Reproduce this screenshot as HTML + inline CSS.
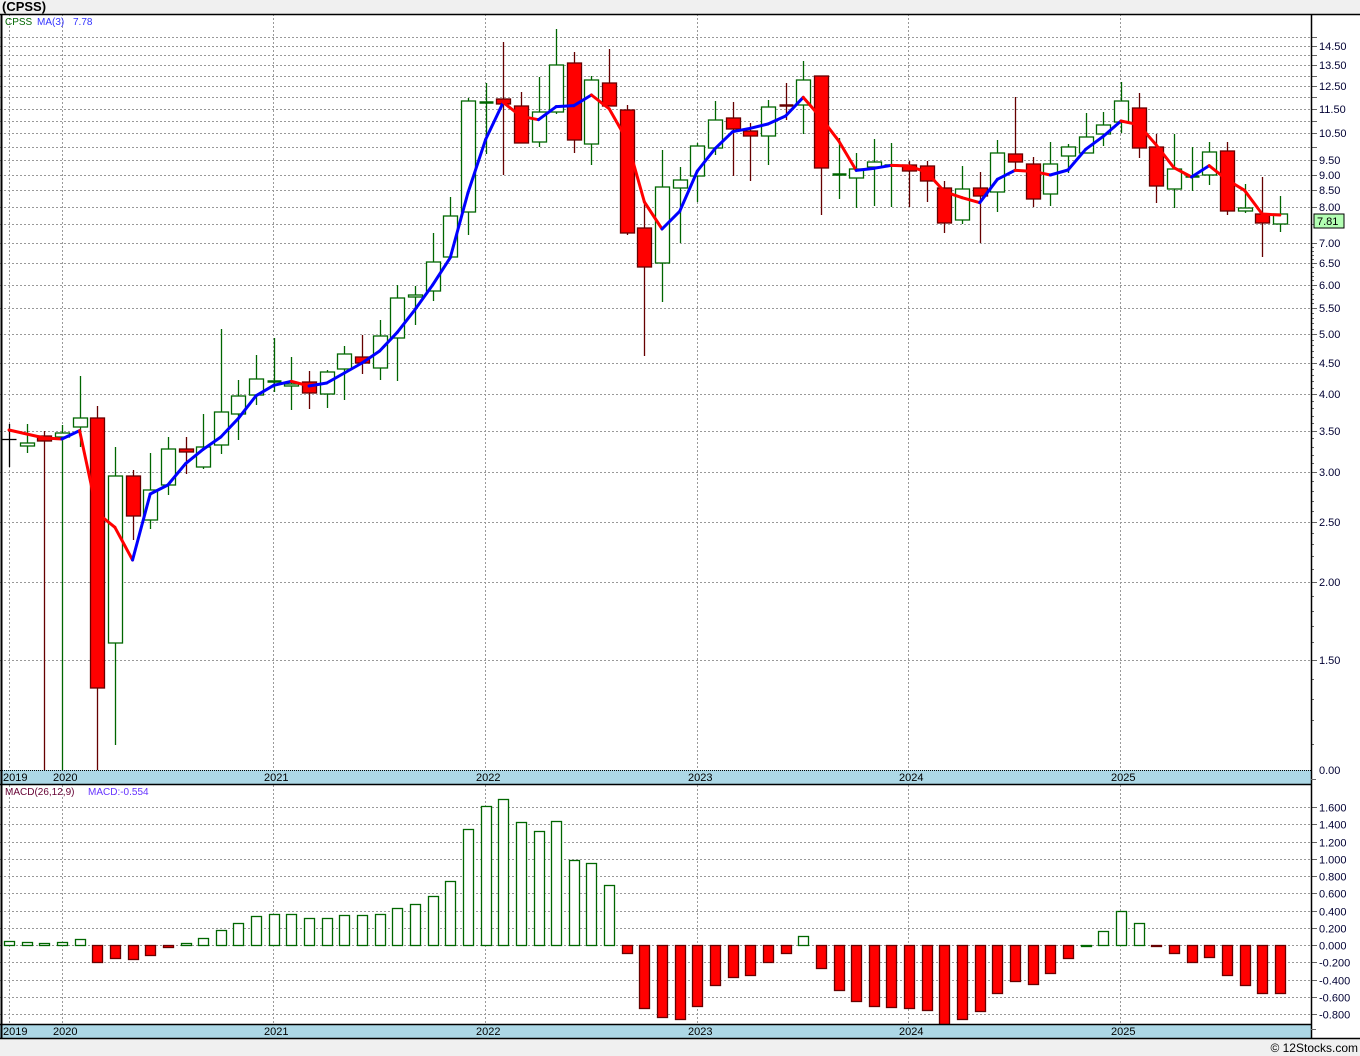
<!DOCTYPE html>
<html><head><meta charset="utf-8">
<style>
html,body{margin:0;padding:0;background:#f0f0f0;width:1360px;height:1056px;overflow:hidden;font-family:"Liberation Sans",sans-serif}
svg{display:block}
</style></head>
<body>
<svg id="c" width="1360" height="1056" xmlns="http://www.w3.org/2000/svg" font-family="Liberation Sans, sans-serif"></svg>
<script>
var S='';
function r(x,y,w,h,f,s,sw){S+='<rect x="'+x+'" y="'+y+'" width="'+w+'" height="'+h+'" fill="'+f+'"'+(s?' stroke="'+s+'" stroke-width="'+(sw||1)+'"':'')+'/>';}
function l(x1,y1,x2,y2,s,w,d){S+='<line x1="'+x1+'" y1="'+y1+'" x2="'+x2+'" y2="'+y2+'" stroke="'+s+'" stroke-width="'+(w||1)+'"'+(d?' stroke-dasharray="'+d+'"':'')+'/>';}
function t(x,y,s,c,sz,b,a){S+='<text x="'+x+'" y="'+y+'" fill="'+c+'" font-size="'+sz+'"'+(b?' font-weight="bold"':'')+(a?' text-anchor="'+a+'"':'')+'>'+s+'</text>';}
r(0,14,1312,756,'#fff');
r(1312,14,48,1024,'#fff');
r(0,785,1312,239,'#fff');
t(2,11,'(CPSS)','#000',13,true);
function py(p){return 769.6-270.6*Math.log(p);}
var labs=[14.5,13.5,12.5,11.5,10.5,9.5,9,8.5,8,7,6.5,6,5.5,5,4.5,4,3.5,3,2.5,2,1.5];
for(var p=7;p<=15.01;p+=0.5){var y=Math.round(py(p))+.5;l(0,y,1311,y,'#999',1,'2,2');l(1311,y,1317,y,'#666');}
[6.5,6,5.5,5,4.5,4,3.5,3,2.5,2,1.5].forEach(function(p){var y=Math.round(py(p))+.5;l(0,y,1311,y,'#999',1,'2,2');l(1311,y,1317,y,'#666');});
for(var p=1.1;p<7;p+=0.1){var y=Math.round(py(p))+.5;l(1311,y,1314,y,'#666');}
labs.forEach(function(p){t(1319,Math.round(py(p))+4,p.toFixed(2),'#000033',11);});
t(1319,774,'0.00','#000033',11);
var yx=[9,62,273,485,697,908,1120];
yx.forEach(function(x){l(x+.5,14,x+.5,770,'#999',1,'2,2');l(x+.5,785,x+.5,1024,'#999',1,'2,2');});
var C=[
[439,439,424,467,'k'],[443,446,424,453,'g'],[436,441,431,770,'r'],[433,437,425,770,'g'],[418,427,376,447,'g'],
[418,688,406,770,'r'],[476,643,447,745,'g'],[476,516,470,540,'r'],[490,520,453,529,'g'],[449,485,437,495,'g'],
[449,452,437,474,'r'],[447,467,414,469,'g'],[412,445,329,454,'g'],[396,414,380,440,'g'],[379,395,355,405,'g'],
[381,381,338,392,'g'],[384,386,357,410,'g'],[382,393,371,409,'r'],[372,394,370,408,'g'],[354,369,346,400,'g'],
[357,363,335,374,'r'],[336,368,320,380,'g'],[298,338,285,381,'g'],[295,297,286,325,'g'],[262,291,233,301,'g'],
[216,257,197,234,'g'],[101,212,98,235,'g'],[102,102,83,154,'g'],[99,104,42,175,'r'],[106,143,92,143,'r'],
[112,142,77,147,'g'],[65,112,29,114,'g'],[63,140,52,153,'r'],[80,144,76,165,'g'],[83,106,49,106,'r'],
[110,233,105,235,'r'],[228,267,200,356,'r'],[187,263,150,302,'g'],[180,188,167,243,'g'],[146,176,143,202,'g'],
[120,148,101,155,'g'],[118,129,102,176,'r'],[131,136,123,181,'r'],[107,136,100,165,'g'],[105,105,83,120,'r'],
[80,105,61,134,'g'],[76,168,76,215,'r'],[174,174,138,199,'g'],[169,178,153,208,'g'],[162,167,139,206,'g'],
[165,165,143,207,'g'],[165,171,161,207,'r'],[166,181,161,202,'r'],[188,223,181,233,'r'],[189,220,166,224,'g'],
[188,196,172,243,'r'],[153,192,140,212,'g'],[154,162,97,170,'r'],[164,199,157,207,'r'],[164,194,142,206,'g'],
[147,156,144,173,'g'],[137,153,113,146,'g'],[125,134,112,146,'g'],[101,122,82,133,'g'],[108,148,93,158,'r'],
[147,186,134,203,'r'],[169,189,134,208,'g'],[176,176,147,191,'g'],[152,175,142,185,'g'],[151,211,142,215,'r'],
[208,211,184,213,'g'],[214,223,177,257,'r'],[214,224,196,232,'g']];
function cx(i){return 9+i*17.65;}
var closes=[];
C.forEach(function(c,i){
 var x=Math.round(cx(i))+.5;
 var col=c[4]=='g'?'#006600':(c[4]=='r'?'#660000':'#000');
 l(x,c[2],x,c[3],col,1.3);
 if(c[4]=='k'){l(x-7,c[0]+.5,x+7,c[0]+.5,'#000',1.3);}
 else if(c[1]-c[0]<2){l(x-7,c[0]+.5,x+7,c[0]+.5,col,2.5);}
 else r(x-7,c[0],14,c[1]-c[0],c[4]=='g'?'#fff':'#f00',col,1.3);
 closes.push(c[4]=='r'?c[1]:c[0]);
});
var ma=[];
for(var i=0;i<C.length;i++){var a=closes.slice(Math.max(0,i-2),i+1).map(function(y){return (769.6-y)/270.6;});var m=a.reduce(function(s,v){return s+v;},0)/a.length;ma.push(769.6-270.6*m);}
ma[0]=430;ma[1]=434;ma[2]=438;
for(var i=1;i<ma.length;i++){var col=ma[i]<ma[i-1]?'#0000ff':'#ff0000';S+='<line x1="'+cx(i-1)+'" y1="'+ma[i-1]+'" x2="'+cx(i)+'" y2="'+ma[i]+'" stroke="'+col+'" stroke-width="3" stroke-linecap="round"/>';}
t(5,25,'CPSS','#006600',10);t(37,25,'MA(3)','#3333ff',10);t(73,25,'7.78','#3333ff',10);
r(1314,214,30,14,'#b3ffb3','#000',1);t(1317,225,'7.81','#000',11);
r(0,770,1311,14,'#add8e6');
l(0,770.5,1311,770.5,'#000',1,'1,1');l(0,784.5,1311,784.5,'#000',1.5);
var yrs=['2019','2020','2021','2022','2023','2024','2025'];
yx.forEach(function(x,i){t(i==0?3:x-9,781,yrs[i],'#000',11);});
function my(v){return 945-v*86.25;}
for(var k=-4;k<=8;k++){var v=k*0.2;var y=Math.round(my(v))+.5;l(0,y,1311,y,'#999',1,'2,2');l(1311,y,1317,y,'#666');t(1319,y+4,(v<-0.001?'-':'')+Math.abs(v).toFixed(3),'#000033',11);}
var M=[941,942,943,942,939,962,958,959,955,947,943,938,930,923,916,914,914,918,918,915,915,914,908,904,896,881,829,806,799,822,831,821,860,863,885,953,1008,1017,1019,1006,985,977,975,962,953,936,968,990,1001,1006,1007,1008,1010,1025,1019,1011,993,981,984,973,958,945,931,911,923,946,953,962,957,975,985,993,993];
M.forEach(function(y,i){var x=Math.round(cx(i))-5;
 if(y<=945){r(x+.5,y+.5,10,Math.max(945-y,1),'#fff','#006600',1.3);}
 else r(x+.5,945.5,10,y-945,'#f00','#660000',1.3);});
t(5,795,'MACD(26,12,9)','#660033',10);t(88,795,'MACD:-0.554','#6633ff',10);
r(0,1024,1311,14,'#add8e6');l(0,1024.5,1311,1024.5,'#000',1.5);l(0,1038.5,1360,1038.5,'#000',1.5);
yx.forEach(function(x,i){t(i==0?3:x-9,1035,yrs[i],'#000',11);});
l(0,14.5,1360,14.5,'#000',1.5);l(1.5,14,1.5,1038,'#000',2);l(1311.5,14,1311.5,1038,'#000',1.5);
l(1311,1029.5,1316,1029.5,'#666');l(1311,779.5,1316,779.5,'#666');
t(1358,1052,'© 12Stocks.com','#000',12,false,'end');
document.getElementById('c').innerHTML=S;
</script>
</body></html>
